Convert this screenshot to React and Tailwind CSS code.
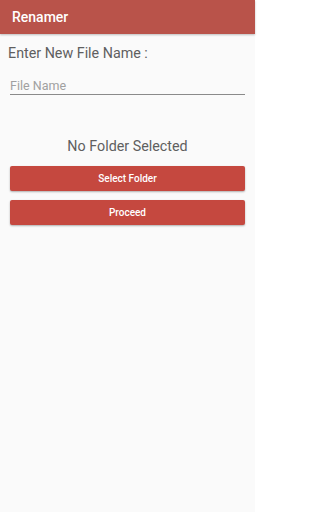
import React from "react";

const App = () => {
  return (
    <div
      className="w-[255px] min-h-[512px] bg-[#fafafa] flex flex-col"
      style={{ fontFamily: "Roboto, 'Noto Sans', sans-serif" }}
    >
      {/* Top bar */}
      <header className="h-[34px] bg-[#b9534a] flex items-center px-3 shadow-[0_1px_2px_rgba(0,0,0,0.25)]">
        <span className="text-white text-[14px] font-medium">Renamer</span>
      </header>

      <div className="flex flex-col px-[8px]">
        <p className="mt-[9px] text-[14.3px] text-[#5f5f5f] leading-[20px]">
          Enter New File Name :
        </p>

        <div className="mt-[15px] mx-[2px] border-b border-[#8a8a8a]">
          <input
            className="block w-full h-[16px] p-0 bg-transparent outline-none text-[12.5px] text-[#333] placeholder-[#a0a0a0] leading-[16px]"
            placeholder="File Name"
          />
        </div>

        <p className="mt-[41px] text-center text-[14.3px] text-[#5f5f5f] leading-[20px]">
          No Folder Selected
        </p>

        <div className="mt-[10px] mx-[2px] flex flex-col gap-[9px]">
          <button className="h-[25px] rounded-[2px] bg-[#c5483f] text-white text-[10px] font-medium shadow-[0_1px_2px_rgba(0,0,0,0.3)]">
            Select Folder
          </button>
          <button className="h-[25px] rounded-[2px] bg-[#c5483f] text-white text-[10px] font-medium shadow-[0_1px_2px_rgba(0,0,0,0.3)]">
            Proceed
          </button>
        </div>
      </div>
    </div>
  );
};

export default App;
